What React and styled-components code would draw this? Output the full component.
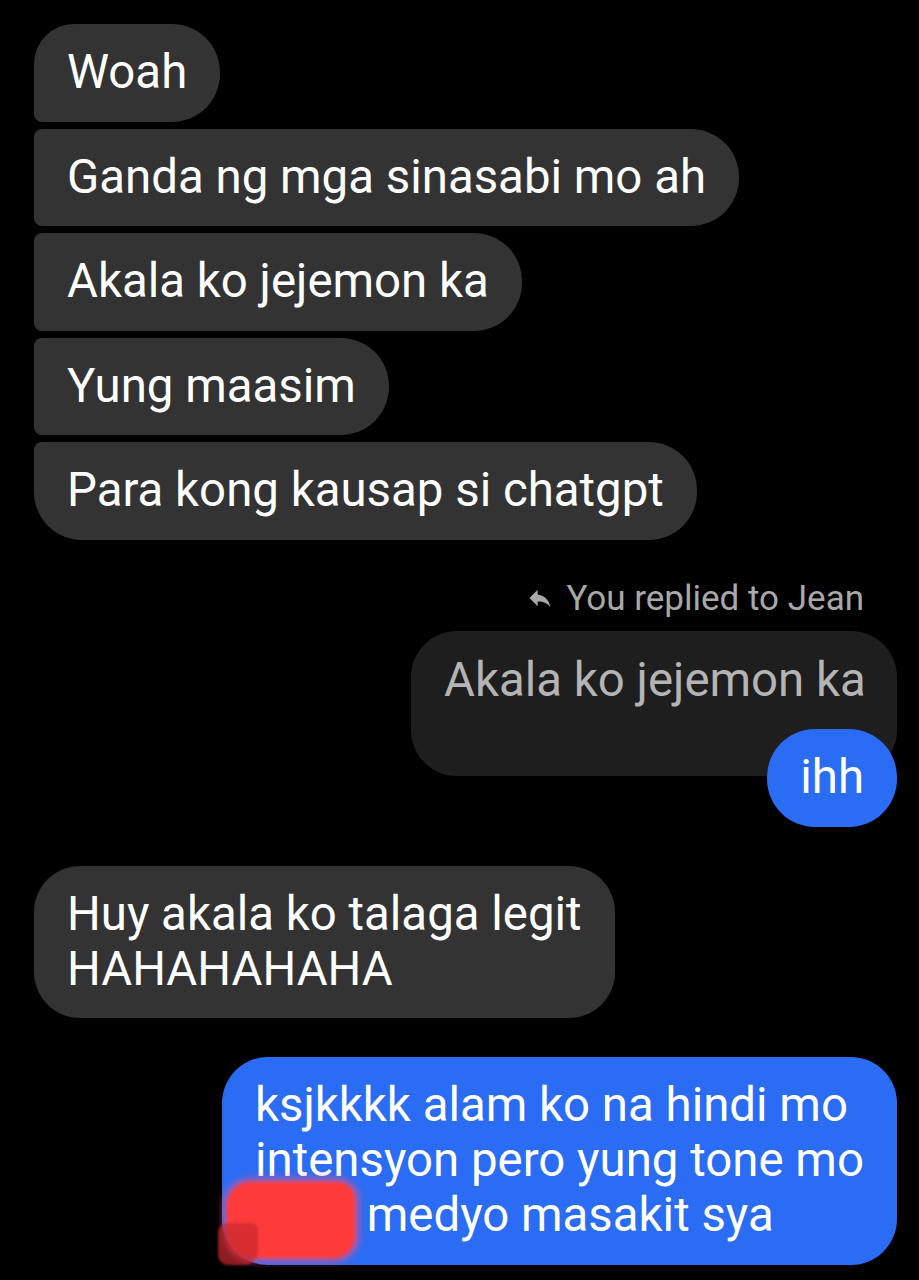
import React from "react";
import styled, { createGlobalStyle, css } from "styled-components";
import { MdReply } from "react-icons/md";

const GlobalStyle = createGlobalStyle`
  html, body {
    margin: 0;
    padding: 0;
    background: #000;
  }
  body {
    font-family: Roboto, "Noto Sans", "Liberation Sans", sans-serif;
    -webkit-font-smoothing: antialiased;
  }
`;

const Screen = styled.div`
  width: 919px;
  height: 1280px;
  overflow: hidden;
  background: #000;
  box-sizing: border-box;
  padding: 24px 22px 0 34px;
  display: flex;
  flex-direction: column;
`;

const Group = styled.div`
  display: flex;
  flex-direction: column;
  align-items: ${(p) => (p.$mine ? "flex-end" : "flex-start")};
  gap: ${(p) => (p.$tight ? 0 : 7)}px;
  margin-top: ${(p) => p.$top || 0}px;
`;

const Bubble = styled.div`
  position: relative;
  box-sizing: border-box;
  font-size: 47.4px;
  line-height: 55px;
  color: #fff;
  padding: 21px 33px 21.5px;
  background: #333333;
  border-radius: ${(p) => p.$radius || "48px"};
  white-space: nowrap;
  ${(p) =>
    p.$blue &&
    css`
      background: #2b6cf5;
    `}
`;

const ReplyLabel = styled.div`
  display: flex;
  align-items: center;
  gap: 12px;
  font-size: 35px;
  line-height: 41px;
  color: #a8a8a8;
  padding-right: 33px;
  margin-bottom: 12.5px;

  svg {
    width: 28px;
    height: 28px;
  }
`;

const Quoted = styled.div`
  box-sizing: border-box;
  width: 486px;
  height: 145px;
  padding: 22px 33px 0 33px;
  font-size: 47.4px;
  line-height: 55px;
  color: #b4b4b4;
  background: #1e1e1e;
  border-radius: 46px;
  text-align: right;
  white-space: nowrap;
`;

const Overlap = styled.div`
  margin-top: -47px;
  position: relative;
`;

/* scribbled-out word, drawn over the bubble */
const Redact = styled.span`
  position: relative;
  display: inline-block;
  width: 100px;
  height: 55px;
  vertical-align: top;

  &::before {
    content: "";
    position: absolute;
    left: -28px;
    top: -6px;
    width: 128px;
    height: 76px;
    background: #ff3a3a;
    border-radius: 24px 18px 22px 26px;
    box-shadow: 0 0 6px 4px rgba(236, 80, 130, 0.75);
    filter: blur(1.5px);
  }

  &::after {
    content: "";
    position: absolute;
    left: -37px;
    top: 35px;
    width: 40px;
    height: 42px;
    background: rgba(200, 40, 45, 0.7);
    border-radius: 10px 6px 14px 10px;
    filter: blur(1px);
  }
`;

export default function App() {
  return (
    <>
      <GlobalStyle />
      <Screen>
        <Group>
          <Bubble $radius="40px 48px 48px 8px">Woah</Bubble>
          <Bubble $radius="8px 48px 48px 8px">Ganda ng mga sinasabi mo ah</Bubble>
          <Bubble $radius="8px 48px 48px 8px">Akala ko jejemon ka</Bubble>
          <Bubble $radius="8px 48px 48px 8px">Yung maasim</Bubble>
          <Bubble $radius="8px 48px 48px 48px">Para kong kausap si chatgpt</Bubble>
        </Group>

        <Group $mine $tight $top={38}>
          <ReplyLabel>
            <MdReply />
            <span>You replied to Jean</span>
          </ReplyLabel>
          <Quoted>Akala ko jejemon ka</Quoted>
          <Overlap>
            <Bubble $blue>ihh</Bubble>
          </Overlap>
        </Group>

        <Group $top={39.5}>
          <Bubble $radius="46px" style={{ paddingBottom: 21 }}>
            Huy akala ko talaga legit
            <br />
            HAHAHAHAHA
          </Bubble>
        </Group>

        <Group $mine $top={39}>
          <Bubble $blue $radius="46px" style={{ width: 675, paddingBottom: 22 }}>
            ksjkkkk alam ko na hindi mo
            <br />
            intensyon pero yung tone mo
            <br />
            <Redact /> medyo masakit sya
          </Bubble>
        </Group>
      </Screen>
    </>
  );
}
